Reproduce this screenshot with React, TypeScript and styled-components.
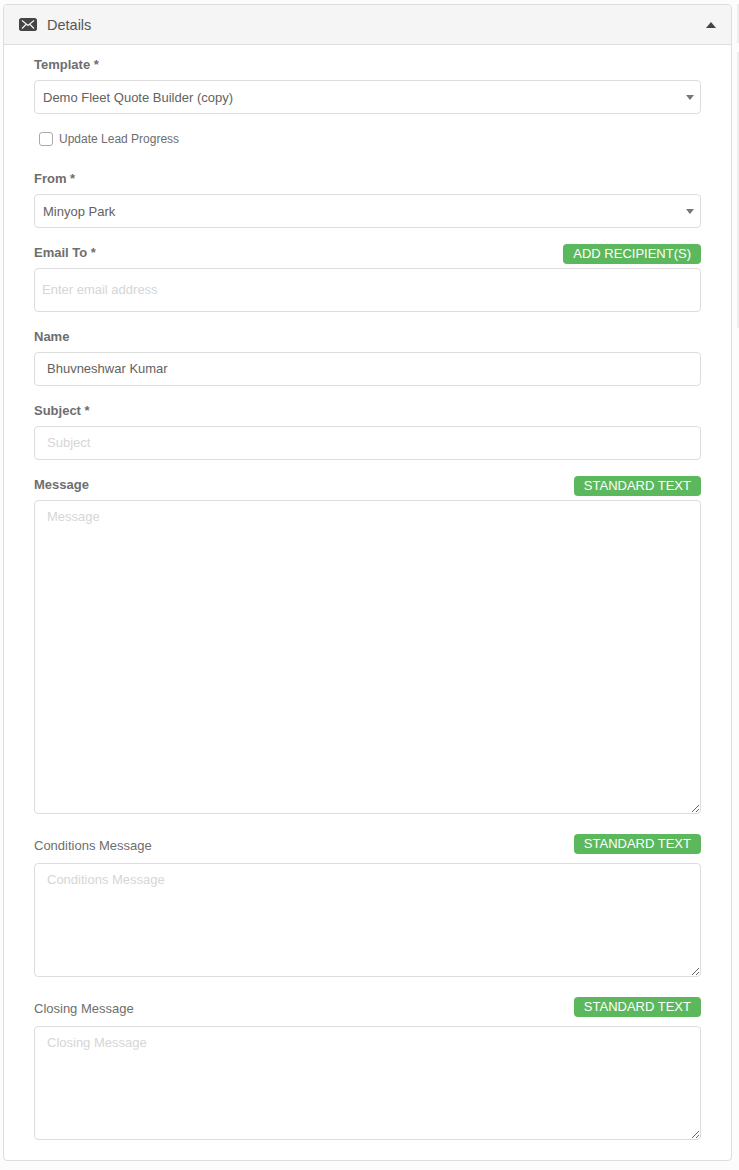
import React from 'react';
import styled, { createGlobalStyle } from 'styled-components';

const GlobalStyle = createGlobalStyle`
  html, body {
    margin: 0;
    padding: 0;
    background: #fcfcfc;
  }
  body {
    font-family: 'Liberation Sans', Arial, sans-serif;
    color: #666;
  }
  * {
    box-sizing: border-box;
  }
`;

const Page = styled.div`
  position: relative;
  width: 739px;
  height: 1170px;
  padding: 4px 7px 9px 3px;
  overflow: hidden;
`;

const Panel = styled.section`
  background: #fff;
  border: 1px solid #ddd;
  border-radius: 4px;
  height: 1157px;
`;

const PanelHeader = styled.header`
  height: 40px;
  background: #f5f5f5;
  border-bottom: 1px solid #ddd;
  border-radius: 3px 3px 0 0;
  padding: 0 15px;
  display: flex;
  align-items: center;
  justify-content: space-between;
`;

const PanelTitle = styled.div`
  display: flex;
  align-items: center;
  gap: 10px;
  font-size: 14.5px;
  color: #555;
`;

const PanelBody = styled.div`
  padding: 11px 30px 0;
`;

const Field = styled.div<{ $mb: number }>`
  margin-bottom: ${(p) => p.$mb}px;
`;

const LabelRow = styled.div<{ $h?: number }>`
  height: ${(p) => p.$h ?? 24}px;
  display: flex;
  justify-content: space-between;
  align-items: flex-start;
`;

const Label = styled.label<{ $plain?: boolean }>`
  font-size: 13px;
  line-height: 18px;
  font-weight: ${(p) => (p.$plain ? 400 : 700)};
  padding-top: ${(p) => (p.$plain ? 3 : 0)}px;
  color: #6e6e6e;
`;

const GreenButton = styled.button`
  height: 20px;
  padding: 0 10px;
  border: 0;
  border-radius: 4px;
  background: #5cb85c;
  color: #fff;
  font-family: inherit;
  font-size: 13px;
  line-height: 18px;
  white-space: nowrap;
`;

const SelectBox = styled.div`
  height: 34px;
  border: 1px solid #ddd;
  border-radius: 4px;
  background: #fff;
  padding: 0 6px 0 8px;
  display: flex;
  align-items: center;
  justify-content: space-between;
  font-size: 13px;
  color: #626262;
`;

const Caret = styled.span<{ $up?: boolean; $dark?: boolean }>`
  width: 0;
  height: 0;
  border-left: ${(p) => (p.$dark ? 5.5 : 4)}px solid transparent;
  border-right: ${(p) => (p.$dark ? 5.5 : 4)}px solid transparent;
  ${(p) =>
    p.$up
      ? `border-bottom: 6px solid ${p.$dark ? '#444' : '#777'};`
      : `border-top: 5px solid ${p.$dark ? '#444' : '#777'};`}
`;

const CheckRow = styled.div`
  display: flex;
  align-items: center;
  gap: 6px;
  height: 14px;
  margin: 18px 0 24px 5px;
  font-size: 12px;
  color: #6e6e6e;
`;

const CheckBox = styled.input`
  appearance: none;
  width: 14px;
  height: 14px;
  margin: 0;
  background: #fff;
  border: 1px solid #aaa;
  border-radius: 3px;
`;

const TextInput = styled.input<{ $h: number; $pl: number }>`
  display: block;
  width: 100%;
  height: ${(p) => p.$h}px;
  border: 1px solid #ddd;
  border-radius: 4px;
  padding: 0 12px 2px ${(p) => p.$pl}px;
  font-family: inherit;
  font-size: 13px;
  color: #626262;
  outline: none;

  &::placeholder {
    color: #d6d6d6;
    opacity: 1;
  }
`;

const TextArea = styled.textarea<{ $h: number }>`
  display: block;
  width: 100%;
  height: ${(p) => p.$h}px;
  border: 1px solid #ddd;
  border-radius: 4px;
  padding: 7px 12px;
  font-family: inherit;
  font-size: 13px;
  line-height: 18px;
  color: #626262;
  outline: none;
  resize: vertical;

  &::placeholder {
    color: #d6d6d6;
    opacity: 1;
  }
`;

const SideStrip = styled.div`
  position: absolute;
  left: 737px;
  top: 4px;
  width: 2px;
  display: flex;
  flex-direction: column;
  gap: 9px;
`;

const SideTab = styled.div<{ $h: number }>`
  height: ${(p) => p.$h}px;
  background: #eee;
`;

const MailIcon = () => (
  <svg width="18" height="13" viewBox="0 0 18 13">
    <rect width="18" height="13" rx="2.5" fill="#444" />
    <path d="M3 2.5 9 7.5 15 2.5M3 10.5 7 6.5M15 10.5 11 6.5" stroke="#f2f2f2" strokeWidth="1.2" fill="none" />
  </svg>
);

const App = () => (
  <Page>
    <GlobalStyle />
    <SideStrip>
      <SideTab $h={39} />
      <SideTab $h={276} />
    </SideStrip>
    <Panel>
      <PanelHeader>
        <PanelTitle>
          <MailIcon />
          Details
        </PanelTitle>
        <Caret $up $dark />
      </PanelHeader>
      <PanelBody>
        <LabelRow>
          <Label>Template *</Label>
        </LabelRow>
        <SelectBox>
          Demo Fleet Quote Builder (copy)
          <Caret />
        </SelectBox>
        <CheckRow>
          <CheckBox type="checkbox" />
          Update Lead Progress
        </CheckRow>
        <Field $mb={16}>
          <LabelRow>
            <Label>From *</Label>
          </LabelRow>
          <SelectBox>
            Minyop Park
            <Caret />
          </SelectBox>
        </Field>
        <Field $mb={16}>
          <LabelRow>
            <Label>Email To *</Label>
            <GreenButton>ADD RECIPIENT(S)</GreenButton>
          </LabelRow>
          <TextInput $h={44} $pl={7} placeholder="Enter email address" />
        </Field>
        <Field $mb={16}>
          <LabelRow>
            <Label>Name</Label>
          </LabelRow>
          <TextInput $h={34} $pl={12} defaultValue="Bhuvneshwar Kumar" />
        </Field>
        <Field $mb={16}>
          <LabelRow>
            <Label>Subject *</Label>
          </LabelRow>
          <TextInput $h={34} $pl={12} placeholder="Subject" />
        </Field>
        <Field $mb={20}>
          <LabelRow>
            <Label>Message</Label>
            <GreenButton>STANDARD TEXT</GreenButton>
          </LabelRow>
          <TextArea $h={314} placeholder="Message" />
        </Field>
        <Field $mb={20}>
          <LabelRow $h={29}>
            <Label $plain>Conditions Message</Label>
            <GreenButton>STANDARD TEXT</GreenButton>
          </LabelRow>
          <TextArea $h={114} placeholder="Conditions Message" />
        </Field>
        <Field $mb={0}>
          <LabelRow $h={29}>
            <Label $plain>Closing Message</Label>
            <GreenButton>STANDARD TEXT</GreenButton>
          </LabelRow>
          <TextArea $h={114} placeholder="Closing Message" />
        </Field>
      </PanelBody>
    </Panel>
  </Page>
);

export default App;
